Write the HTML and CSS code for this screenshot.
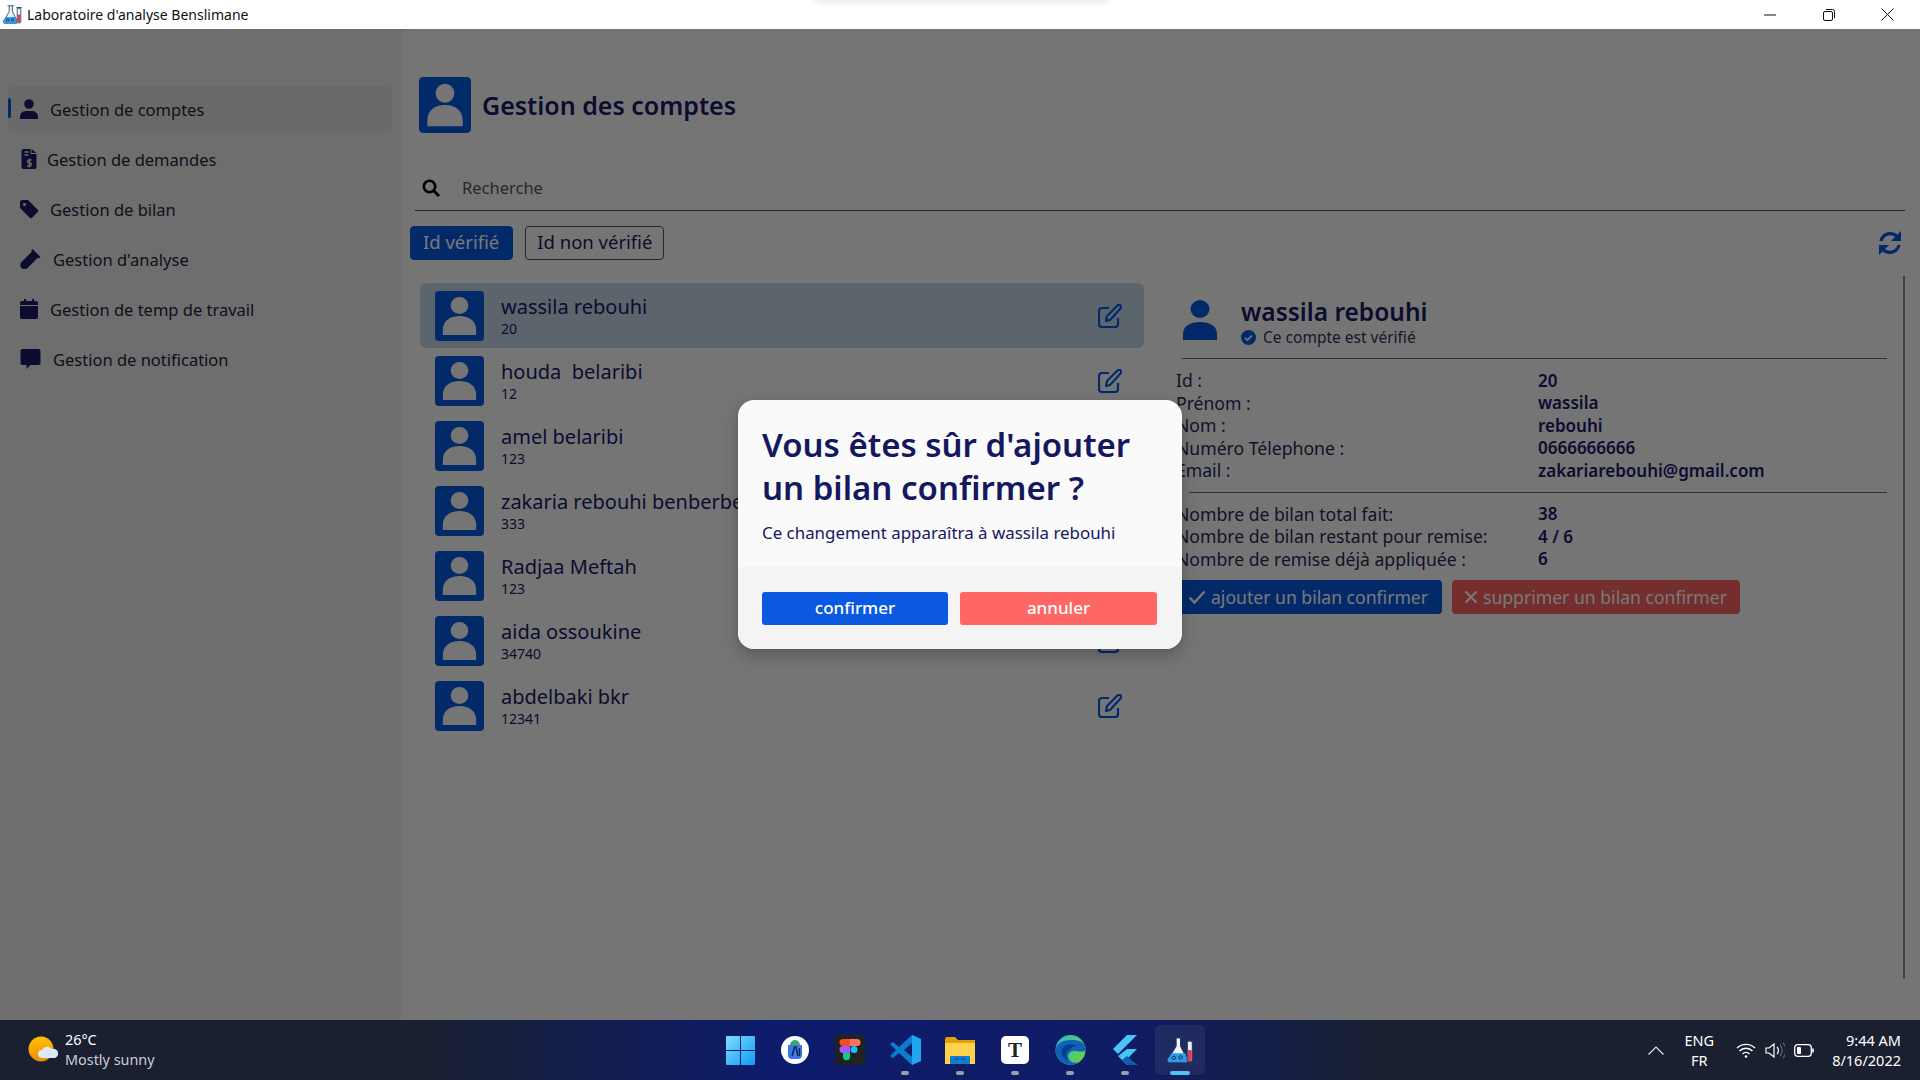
FILE: index.html
```html
<!DOCTYPE html>
<html lang="fr">
<head>
  <meta charset="UTF-8">
  <title>Laboratoire d'analyse Benslimane</title>
  <link rel="stylesheet" href="styles.css">
</head>
<body>
  <svg class="defs" width="0" height="0">
    <symbol id="avatar" viewBox="0 0 50 50" preserveAspectRatio="none">
      <rect width="50" height="50" rx="4" fill="#0659e0"/>
      <ellipse cx="25" cy="14.5" rx="9" ry="8.5" fill="#f9f9fb"/>
      <path d="M8 44v-5c0-9 7-14 17-14s17 5 17 14v5z" fill="#f9f9fb"/>
    </symbol>
    <symbol id="edit" viewBox="0 0 24 24">
      <path d="M20 14v6a3 3 0 0 1-3 3H4a3 3 0 0 1-3-3V7a3 3 0 0 1 3-3h7" fill="none" stroke="currentColor" stroke-width="2.200"/>
      <path d="M8 17l1-5L19.500 1.500a2 2 0 0 1 3 0a2 2 0 0 1 0 3L12 16z" fill="none" stroke="currentColor" stroke-width="2.200" stroke-linejoin="round"/>
    </symbol>
    <symbol id="flasks" viewBox="0 0 50 50">
      <path d="M14 3h16M18 4v14L4 41c-2 4 0 6 3 6h28c3 0 5-2 3-6L26 18V4" fill="#eef3f7" stroke="#1c3a5e" stroke-width="2"/>
      <path d="M10 31l24 0 5 11c1 3-1 5-3 5H6c-2 0-4-2-3-5z" fill="#2f9be8"/>
      <circle cx="14" cy="39" r="3" fill="none" stroke="#123" stroke-width="1.500"/>
      <circle cx="26" cy="38" r="3" fill="none" stroke="#123" stroke-width="1.500"/>
      <rect x="38" y="9" width="9" height="37" rx="3" fill="#eef3f7" stroke="#1c3a5e" stroke-width="2"/>
      <rect x="39" y="25" width="7" height="20" rx="2" fill="#e23b50"/>
      <path d="M36 8h13" stroke="#1c3a5e" stroke-width="3"/>
    </symbol>
  </svg>

  <header class="titlebar">
    <svg class="title-logo"><use href="#flasks"/></svg>
    <span class="title-text">Laboratoire d'analyse Benslimane</span>
    <div class="win-btns">
      <svg width="12" height="12" viewBox="0 0 12 12"><path d="M0 6h12" stroke="#111" stroke-width="1"/></svg>
      <svg width="12" height="12" viewBox="0 0 12 12"><rect x=".5" y="2.500" width="9" height="9" rx="1.500" fill="none" stroke="#111"/><path d="M3 .5h6.500a2 2 0 0 1 2 2V9" fill="none" stroke="#111"/></svg>
      <svg width="13" height="13" viewBox="0 0 13 13"><path d="M.5.5l12 12M12.500.5l-12 12" stroke="#111"/></svg>
    </div>
  </header>

  <div class="app">
    <nav class="sidebar">
      <a class="nav-item active">
        <svg class="nav-icon" viewBox="0 0 18 20"><circle cx="9" cy="5" r="4.800"/><path d="M0 20v-2c0-4 3-6 6-6h6c3 0 6 2 6 6v2z"/></svg>
        <span>Gestion de comptes</span>
      </a>
      <a class="nav-item">
        <svg class="nav-icon" viewBox="0 0 15 20"><path d="M2 0h7v5h6v13a2 2 0 0 1-2 2H2a2 2 0 0 1-2-2V2a2 2 0 0 1 2-2zM10 0l5 4h-5z"/><path d="M3 3h4M3 6h4" stroke="#eaeaea" stroke-width="1.500"/><path d="M10 11H7.500a1.300 1.300 0 0 0 0 3h1a1.300 1.300 0 0 1 0 3H5.500M8 9.500v9" fill="none" stroke="#eaeaea" stroke-width="1.300"/></svg>
        <span class="t-demandes">Gestion de demandes</span>
      </a>
      <a class="nav-item">
        <svg class="nav-icon" viewBox="0 0 18 18"><path d="M0 2a2 2 0 0 1 2-2h6l9.500 9.500a2 2 0 0 1 0 2.800l-5.200 5.200a2 2 0 0 1-2.800 0L0 8z"/><circle cx="4.500" cy="4.500" r="1.600" fill="#eaeaea"/></svg>
        <span>Gestion de bilan</span>
      </a>
      <a class="nav-item">
        <svg class="nav-icon wide" viewBox="0 0 20 20"><path d="M12 0l8 8-1.500 1.500-1-1L7 19a4.200 4.200 0 0 1-6-6L11.500 2.500l-1-1z"/></svg>
        <span class="t-wide">Gestion d'analyse</span>
      </a>
      <a class="nav-item">
        <svg class="nav-icon" viewBox="0 0 18 20"><path d="M4 0h2v3H4zM12 0h2v3h-2z"/><path d="M2 2h14a2 2 0 0 1 2 2v2H0V4a2 2 0 0 1 2-2zM0 7h18v11a2 2 0 0 1-2 2H2a2 2 0 0 1-2-2z"/></svg>
        <span>Gestion de temp de travail</span>
      </a>
      <a class="nav-item">
        <svg class="nav-icon wide" viewBox="0 0 20 20"><path d="M2 0h16a2 2 0 0 1 2 2v12a2 2 0 0 1-2 2h-8l-4 4v-4H2a2 2 0 0 1-2-2V2a2 2 0 0 1 2-2z"/></svg>
        <span class="t-wide">Gestion de notification</span>
      </a>
    </nav>

    <main class="main">
      <div class="page-head">
        <svg class="page-avatar"><use href="#avatar"/></svg>
        <h1>Gestion des comptes</h1>
      </div>

      <div class="search">
        <svg class="search-icon" viewBox="0 0 18 18"><circle cx="7.500" cy="7.500" r="5.700" fill="none" stroke="#000" stroke-width="2.600"/><path d="M11.500 11.500L17 17" stroke="#000" stroke-width="3"/></svg>
        <span>Recherche</span>
      </div>

      <div class="tabs">
        <button class="tab on">Id vérifié</button>
        <button class="tab">Id non vérifié</button>
        <svg class="refresh" viewBox="0 0 24 24" fill="none" stroke="#0659e0" stroke-width="3.200">
          <path d="M3 10a9.500 9.500 0 0 1 16.500-4"/><path d="M23 0v10H13z" fill="#0659e0" stroke="none"/>
          <path d="M21 14a9.500 9.500 0 0 1-16.500 4"/><path d="M1 24V14h10z" fill="#0659e0" stroke="none"/>
        </svg>
      </div>

      <div class="content">
        <ul class="list">
          <li class="row sel">
            <svg class="row-avatar"><use href="#avatar"/></svg>
            <div class="row-text"><div class="name">wassila rebouhi</div><div class="uid">20</div></div>
            <svg class="edit"><use href="#edit"/></svg>
          </li>
          <li class="row">
            <svg class="row-avatar"><use href="#avatar"/></svg>
            <div class="row-text"><div class="name">houda&nbsp; belaribi</div><div class="uid">12</div></div>
            <svg class="edit"><use href="#edit"/></svg>
          </li>
          <li class="row">
            <svg class="row-avatar"><use href="#avatar"/></svg>
            <div class="row-text"><div class="name">amel belaribi</div><div class="uid">123</div></div>
            <svg class="edit"><use href="#edit"/></svg>
          </li>
          <li class="row">
            <svg class="row-avatar"><use href="#avatar"/></svg>
            <div class="row-text"><div class="name">zakaria rebouhi benberbere</div><div class="uid">333</div></div>
            <svg class="edit"><use href="#edit"/></svg>
          </li>
          <li class="row">
            <svg class="row-avatar"><use href="#avatar"/></svg>
            <div class="row-text"><div class="name">Radjaa Meftah</div><div class="uid">123</div></div>
            <svg class="edit"><use href="#edit"/></svg>
          </li>
          <li class="row">
            <svg class="row-avatar"><use href="#avatar"/></svg>
            <div class="row-text"><div class="name">aida ossoukine</div><div class="uid">34740</div></div>
            <svg class="edit"><use href="#edit"/></svg>
          </li>
          <li class="row">
            <svg class="row-avatar"><use href="#avatar"/></svg>
            <div class="row-text"><div class="name">abdelbaki bkr</div><div class="uid">12341</div></div>
            <svg class="edit"><use href="#edit"/></svg>
          </li>
        </ul>

        <section class="detail">
          <div class="detail-head">
            <svg class="detail-icon" viewBox="0 0 34 40" fill="#0659e0"><ellipse cx="17" cy="9" rx="9.500" ry="9"/><path d="M0 40v-6c0-8 7-12 17-12s17 4 17 12v6z"/></svg>
            <div>
              <div class="detail-name">wassila rebouhi</div>
              <div class="verified">
                <svg width="15" height="15" viewBox="0 0 15 15"><circle cx="7.500" cy="7.500" r="7.500" fill="#0659e0"/><path d="M4 7.800l2.500 2.400L11 5.500" fill="none" stroke="#f9f9fb" stroke-width="1.800"/></svg>
                <span>Ce compte est vérifié</span>
              </div>
            </div>
          </div>

          <div class="rows first">
            <span>Id :</span><b>20</b>
            <span>Prénom :</span><b>wassila</b>
            <span>Nom :</span><b>rebouhi</b>
            <span>Numéro Télephone :</span><b>0666666666</b>
            <span>Email :</span><b>zakariarebouhi@gmail.com</b>
          </div>
          <div class="rows">
            <span>Nombre de bilan total fait:</span><b>38</b>
            <span>Nombre de bilan restant pour remise:</span><b>4 / 6</b>
            <span>Nombre de remise déjà appliquée :</span><b>6</b>
          </div>

          <div class="actions">
            <button class="act add">
              <svg width="18" height="14" viewBox="0 0 18 14"><path d="M1.500 7.500l5 5L16.500 1.500" fill="none" stroke="#fff" stroke-width="2.400"/></svg>
              ajouter un bilan confirmer
            </button>
            <button class="act del">
              <svg width="14" height="14" viewBox="0 0 14 14"><path d="M1.500 1.500l11 11M12.500 1.500l-11 11" stroke="#fff" stroke-width="2.200"/></svg>
              supprimer un bilan confirmer
            </button>
          </div>
        </section>
      </div>

      <div class="scroll-bar"></div>
    </main>

    <div class="overlay">
      <div class="dialog">
        <div class="dialog-body">
          <h2>Vous êtes sûr d'ajouter un bilan confirmer ?</h2>
          <p>Ce changement apparaîtra à wassila rebouhi</p>
        </div>
        <div class="dialog-foot">
          <button class="dlg-btn ok">confirmer</button>
          <button class="dlg-btn no">annuler</button>
        </div>
      </div>
    </div>
  </div>

  <footer class="taskbar">
    <div class="weather">
      <svg width="30" height="28" viewBox="0 0 30 28">
        <defs><linearGradient id="sun" x1="0" y1="0" x2="0" y2="1"><stop offset="0" stop-color="#ffc107"/><stop offset="1" stop-color="#f08a00"/></linearGradient></defs>
        <circle cx="13" cy="13" r="12.500" fill="url(#sun)"/>
        <path d="M14 22a4 4 0 0 1 0-8 6 6 0 0 1 10-1 4.500 4.500 0 0 1 3 9z" fill="#dce8f5"/>
      </svg>
      <div>
        <div class="temp">26°C</div>
        <div class="sky">Mostly sunny</div>
      </div>
    </div>

    <div class="apps">
      <div class="app-slot">
        <svg width="29" height="29" viewBox="0 0 29 29"><defs><linearGradient id="win" x1="0" y1="0" x2="1" y2="1"><stop offset="0" stop-color="#7fdcff"/><stop offset="1" stop-color="#0f9bf5"/></linearGradient></defs><path fill="url(#win)" d="M0 1a1 1 0 0 1 1-1h13v14H0zM15 0h13a1 1 0 0 1 1 1v13H15zM0 15h14v14H1a1 1 0 0 1-1-1zM15 15h14v13a1 1 0 0 1-1 1H15z"/></svg>
      </div>
      <div class="app-slot">
        <svg width="28" height="28" viewBox="0 0 28 28"><circle cx="14" cy="14" r="14" fill="#fff"/><path d="M7 9h14v10a4 4 0 0 1-4 4h-6a4 4 0 0 1-4-4z" fill="#3b78e7"/><path d="M9 9a5 5 0 0 1 10 0z" fill="#3aa76d"/><path d="M11 20l2.500-9h1.500l2 9M18.500 12v8" fill="none" stroke="#10214a" stroke-width="1.400"/></svg>
      </div>
      <div class="app-slot">
        <svg width="30" height="30" viewBox="0 0 30 30"><rect width="30" height="30" fill="#222"/><path d="M8 4h7v7H8a3.500 3.500 0 0 1 0-7z" fill="#f24e1e"/><path d="M15 4h7a3.500 3.500 0 0 1 0 7h-7z" fill="#ff7262"/><path d="M8 11h7v7H8a3.500 3.500 0 0 1 0-7z" fill="#a259ff"/><circle cx="19" cy="14.500" r="3.500" fill="#1abcfe"/><path d="M8 18h7v4a3.500 3.500 0 1 1-7-.500z" fill="#0acf83"/></svg>
      </div>
      <div class="app-slot dot">
        <svg width="31" height="30" viewBox="0 0 31 30"><path d="M22 0l9 4v22l-9 4L9 18l-6 5-3-2 6-6-6-6 3-2 6 5z" fill="#0b7dcf"/><path d="M22 0l9 4v22l-9 4z" fill="#22a6f0"/><path d="M22 8l-8 7 8 7z" fill="#0e1f6a"/></svg>
      </div>
      <div class="app-slot dot">
        <svg width="30" height="27" viewBox="0 0 30 27"><path d="M0 2a2 2 0 0 1 2-2h8l3 3h17v8H0z" fill="#e3a008"/><path d="M0 6h30v21H0z" fill="#ffd24d"/><rect x="5" y="19" width="20" height="8" rx="1" fill="#0f7bd1"/><path d="M10 22h10" stroke="#0a4a8a"/></svg>
      </div>
      <div class="app-slot dot">
        <div class="t-icon">T</div>
      </div>
      <div class="app-slot dot">
        <svg width="31" height="30" viewBox="0 0 31 30"><defs><linearGradient id="edge" x1="0" y1="0" x2="1" y2=".6"><stop offset="0" stop-color="#2bb8d8"/><stop offset="1" stop-color="#5fd04a"/></linearGradient></defs><circle cx="15.500" cy="15" r="15" fill="url(#edge)"/><path d="M.5 15C1 28 15 34 24 27c-6 2-11-1-11-6 0-3 4-6 8-5 5 1 9 1 10-2C30 6 23 5 16 5 7 5 1 9 .5 15z" fill="#0f62b8"/><path d="M14 15c-4 2-4 8 0 10-6-1-9-6-7-11 3-5 10-6 15-3-3 0-6 2-8 4z" fill="#0a3f8c"/></svg>
      </div>
      <div class="app-slot dot">
        <svg width="24" height="30" viewBox="0 0 24 30"><path d="M14 0h10L5 19 0 14z" fill="#47c5fb"/><path d="M14 14h10l-9 9 9 7H14l-5-5-4-4z" fill="#47c5fb"/><path d="M9 25l5-4 10 9H14z" fill="#0a5fa8"/></svg>
      </div>
      <div class="app-slot current">
        <svg width="28" height="30"><use href="#flasks"/></svg>
      </div>
    </div>

    <div class="tray">
      <svg class="chev" width="16" height="9" viewBox="0 0 16 9"><path d="M.5 8.500L8 1l7.500 7.500" fill="none" stroke="#eee" stroke-width="1.100"/></svg>
      <div class="lang">ENG<br>FR</div>
      <div class="tray-icons">
        <svg width="20" height="15" viewBox="0 0 20 15" fill="none" stroke="#fff" stroke-width="1.400"><path d="M1 5a13 13 0 0 1 18 0M3.500 8a9 9 0 0 1 13 0M6.500 11a4.500 4.500 0 0 1 7 0"/><circle cx="10" cy="13.500" r="1.300" fill="#fff" stroke="none"/></svg>
        <svg width="20" height="17" viewBox="0 0 20 17" fill="none" stroke="#fff" stroke-width="1.200"><path d="M1 6h3l5-4v13l-5-4H1z"/><path d="M12 5a5 5 0 0 1 0 7"/><path d="M15 3a8 8 0 0 1 0 11M18 1a11 11 0 0 1 0 15" stroke="#666"/></svg>
        <svg width="20" height="13" viewBox="0 0 20 13"><rect x=".7" y=".7" width="16.600" height="11.600" rx="3" fill="none" stroke="#fff" stroke-width="1.300"/><rect x="3" y="3" width="4" height="7" rx="1" fill="#fff"/><path d="M19 4.500v4" stroke="#fff" stroke-width="1.600"/></svg>
      </div>
      <div class="clock">9:44 AM<br>8/16/2022</div>
    </div>
  </footer>
</body>
</html>
```

FILE: styles.css
```css
* {
  box-sizing: border-box;
}

body {
  margin: 0;
  width: 1920px;
  height: 1080px;
  overflow: hidden;
  display: flex;
  flex-direction: column;
  font-family: "Noto Sans", sans-serif;
  color: #1a1a66;
}

.defs {
  position: absolute;
}

/* barre de titre */
.titlebar {
  height: 29px;
  background: #fff;
  display: flex;
  align-items: center;
  padding-left: 2px;
  flex: none;
  position: relative;
}

/* ombre de la fenetre derriere, en haut */
.titlebar::before {
  content: "";
  position: absolute;
  left: 815px;
  top: -6px;
  width: 295px;
  height: 6px;
  box-shadow: 0 1px 7px rgba(0, 0, 0, 0.14);
  border-radius: 8px;
}

.title-logo {
  width: 20px;
  height: 21px;
}

.title-text {
  margin-left: 5px;
  font-size: 14px;
  color: #111;
}

.win-btns {
  margin-left: auto;
  width: 180px;
  display: flex;
  justify-content: space-between;
  align-items: center;
  padding: 0 26px 0 24px;
}

/* zone principale */
.app {
  flex: 1;
  display: flex;
  position: relative;
  background: #eaeaea;
  min-height: 0;
}

.sidebar {
  width: 401px;
  flex: none;
  padding: 57px 9px 0 8px;
}

.nav-item {
  height: 46px;
  margin-bottom: 4px;
  padding-left: 12px;
  display: flex;
  align-items: center;
  gap: 12px;
  font-size: 16.500px;
  color: #25253c;
  border-radius: 5px;
  position: relative;
}

.nav-item.active {
  background: #e0e0e0;
}

.nav-item.active::before {
  content: "";
  position: absolute;
  left: 0;
  top: 12px;
  width: 3px;
  height: 20px;
  background: #0659e0;
  border-radius: 2px;
}

.nav-icon {
  width: 18px;
  height: 20px;
  fill: #1a1a66;
  flex: none;
}

.nav-icon.wide {
  width: 21px;
}

.t-demandes {
  margin-left: -3px;
}

.main {
  flex: 1;
  position: relative;
  background: #f9f9fb;
  border-radius: 10px 0 0 0;
  padding-top: 48px;
}

.page-head {
  display: flex;
  align-items: center;
  gap: 11px;
  padding-left: 18px;
  height: 56px;
}

.page-avatar {
  width: 52px;
  height: 56px;
}

h1 {
  margin: 0;
  font-size: 25px;
  font-weight: 600;
  color: #1a1a66;
}

.search {
  margin: 32px 15px 0 14px;
  height: 46px;
  border-bottom: 1px solid #555;
  display: flex;
  align-items: center;
  gap: 22px;
  padding-left: 7px;
  font-size: 16.500px;
  color: #555;
}

.search-icon {
  width: 18px;
  height: 18px;
}

.tabs {
  margin-top: 15px;
  padding: 0 18px 0 9px;
  height: 34px;
  display: flex;
  align-items: center;
  gap: 12px;
}

.tab {
  height: 34px;
  padding: 0 11px 4px;
  border: 1px solid #555;
  border-radius: 4px;
  background: transparent;
  font: 18.500px "Noto Sans", sans-serif;
  color: #1a1a66;
}

.tab.on {
  padding: 0 13px 4px 12px;
  background: #0659e0;
  border-color: #0659e0;
  color: #fff;
}

.refresh {
  width: 24px;
  height: 24px;
  margin-left: auto;
}

.content {
  display: flex;
  margin-top: 23px;
}

.list {
  list-style: none;
  margin: 0 0 0 19px;
  padding: 0;
  width: 724px;
  flex: none;
}

.row {
  height: 65px;
  display: flex;
  align-items: center;
  padding: 0 22px 0 15px;
  border-radius: 6px;
}

.row.sel {
  background: #c3d6e6;
}

.row-avatar {
  width: 49px;
  height: 50px;
  flex: none;
}

.row-text {
  margin-left: 17px;
  flex: 1;
  min-width: 0;
}

.name {
  font-size: 20px;
  line-height: 27px;
  white-space: nowrap;
  color: #1a1a66;
}

.uid {
  font-size: 14px;
  line-height: 18px;
  color: #1a1a66;
}

.edit {
  width: 24px;
  height: 24px;
  color: #0659e0;
  flex: none;
}

.detail {
  margin-left: 32px;
  width: 712px;
}

.detail-head {
  display: flex;
  gap: 24px;
  padding: 12px 0 0 1px;
  height: 76px;
  margin-left: 6px;
  border-bottom: 1px solid #666;
  margin-right: 1px;
}

.detail-icon {
  width: 34px;
  height: 40px;
  margin-top: 5px;
  flex: none;
}

.detail-name {
  font-size: 24.500px;
  font-weight: 600;
  line-height: 33px;
}

.verified {
  display: flex;
  align-items: center;
  gap: 7px;
  margin-top: -1px;
  font-size: 15.500px;
  line-height: 20px;
  color: #33335a;
}

.rows {
  display: grid;
  grid-template-columns: 362px 1fr;
  grid-auto-rows: 22.500px;
  align-items: center;
  font-size: 17.600px;
  padding-top: 10px;
  color: #2a2a55;
}

.rows.first {
  padding-bottom: 11px;
  margin-right: 1px;
  position: relative;
}

.rows.first::after {
  content: "";
  position: absolute;
  left: 13px;
  right: 0;
  bottom: 0;
  height: 1px;
  background: #666;
}

.rows b {
  font-size: 17px;
  font-weight: 600;
  color: #1a1a66;
}

.actions {
  display: flex;
  gap: 10px;
  margin-top: 10px;
}

.act {
  height: 34px;
  border: none;
  border-radius: 4px;
  color: #fff;
  display: flex;
  align-items: center;
  gap: 5px;
  padding: 0 12px;
  font: 17.600px "Noto Sans", sans-serif;
}

.act.add {
  background: #0659e0;
  width: 266px;
}

.act.del {
  background: #f66363;
  width: 288px;
}

.scroll-bar {
  position: absolute;
  left: 1502px;
  top: 247px;
  width: 2px;
  height: 703px;
  background: #888;
}

/* boite de dialogue */
.overlay {
  position: absolute;
  inset: 0;
  background: rgba(0, 0, 0, 0.53);
  display: flex;
  align-items: center;
  justify-content: center;
}

.dialog {
  width: 444px;
  height: 249px;
  border-radius: 16px;
  overflow: hidden;
  background: #fafafb;
  box-shadow: 0 6px 16px rgba(0, 0, 0, 0.25);
  display: flex;
  flex-direction: column;
}

.dialog-body {
  padding: 23px 24px 0;
  height: 167px;
}

h2 {
  margin: 0;
  font-size: 33px;
  line-height: 43px;
  font-weight: 600;
  color: #15185e;
}

p {
  margin: 12px 0 0;
  font-size: 16.900px;
  color: #15185e;
}

.dialog-foot {
  flex: 1;
  background: #f4f4f5;
  display: flex;
  gap: 12px;
  padding: 25px 24px 0;
}

.dlg-btn {
  height: 33px;
  padding: 0 0 2px;
  border: none;
  border-radius: 3px;
  color: #fff;
  font: 500 17px "Noto Sans", sans-serif;
}

.dlg-btn.ok {
  width: 186px;
  background: #0a59e0;
}

.dlg-btn.no {
  width: 197px;
  background: #ff6666;
}

/* barre des taches */
.taskbar {
  height: 60px;
  flex: none;
  background: linear-gradient(90deg, #1a2030 0%, #1a2030 22%, #0d1c6b 40%, #0f1c66 58%, #1a2030 72%, #1a2030 100%);
  display: grid;
  grid-template-columns: 1fr auto 1fr;
  align-items: center;
  color: #fff;
}

.weather {
  display: flex;
  align-items: center;
  gap: 7px;
  padding-left: 28px;
  font-size: 14.400px;
  line-height: 20px;
}

.sky {
  color: #ccd;
}

.apps {
  display: flex;
  margin-left: -3px;
}

.app-slot {
  width: 55px;
  height: 50px;
  display: flex;
  align-items: center;
  justify-content: center;
  position: relative;
}

.app-slot.dot::after,
.app-slot.current::after {
  content: "";
  position: absolute;
  bottom: 0;
  left: 50%;
  width: 8px;
  height: 4px;
  margin-left: -4px;
  border-radius: 2px;
  background: #9a9fae;
}

.app-slot.current {
  background: rgba(255, 255, 255, 0.06);
  border-radius: 5px;
  width: 50px;
  margin-left: 2px;
}

.app-slot.current::after {
  width: 20px;
  margin-left: -10px;
  background: #4fc3f7;
}

.t-icon {
  width: 28px;
  height: 28px;
  border-radius: 5px;
  background: #fff;
  color: #222;
  font: 700 21px/28px "Liberation Serif", serif;
  text-align: center;
}

.tray {
  display: flex;
  align-items: center;
  justify-content: flex-end;
  padding-right: 19px;
  font-size: 14.500px;
  line-height: 20px;
}

.chev {
  margin-right: 21px;
}

.lang {
  text-align: center;
  margin-right: 22px;
}

.tray-icons {
  display: flex;
  align-items: center;
  gap: 9px;
  margin-right: 18px;
}

.clock {
  text-align: right;
}
```
